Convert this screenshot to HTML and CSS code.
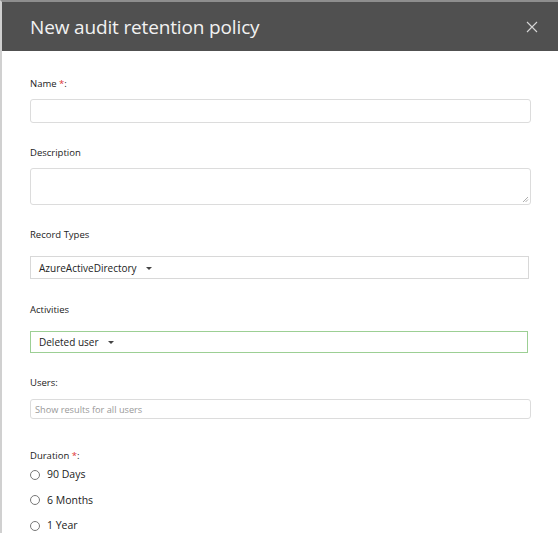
FILE: index.html
```html
<!DOCTYPE html>
<html>
<head>
<meta charset="utf-8">
<link rel="stylesheet" href="styles.css">
</head>
<body>
<div class="panel">
  <header class="head">
    <h1 class="title">New audit retention policy</h1>
    <svg class="close" width="12" height="12" viewBox="0 0 12 12"><path d="M1 1L11 11M11 1L1 11" stroke="#d6d6d6" stroke-width="1.1" fill="none"/></svg>
  </header>
  <form class="form">
    <div class="field">
      <label class="label">Name <span class="req">*</span>:</label>
      <div class="input name-input"></div>
    </div>
    <div class="field">
      <label class="label">Description</label>
      <div class="input textarea"><svg class="grip" width="7" height="7" viewBox="0 0 7 7"><path d="M6 1L1 6M6 3.5L3.5 6" stroke="#999" stroke-width="0.8"/></svg></div>
    </div>
    <div class="field wide">
      <label class="label">Record Types</label>
      <div class="select">AzureActiveDirectory<span class="caret"></span></div>
    </div>
    <div class="field wide act">
      <label class="label">Activities</label>
      <div class="select active">Deleted user<span class="caret"></span></div>
    </div>
    <div class="field users-field">
      <label class="label">Users:</label>
      <div class="input users">Show results for all users</div>
    </div>
    <div class="field duration">
      <label class="label">Duration <span class="req">*</span>:</label>
      <div class="radios">
        <div class="radio"><span class="dot"></span>90 Days</div>
        <div class="radio"><span class="dot"></span>6 Months</div>
        <div class="radio"><span class="dot"></span>1 Year</div>
      </div>
    </div>
  </form>
</div>
</body>
</html>
```
FILE: styles.css
```css
* { box-sizing: border-box; }
html, body { margin: 0; padding: 0; background: #fff; }
body {
  font-family: "Open Sans", "Noto Sans", sans-serif;
  color: #333;
  width: 558px;
  height: 533px;
  overflow: hidden;
}
.panel {
  border-top: 2px solid #8e8e8e;
  height: 533px;
  overflow: hidden;
  border-left: 2px solid #d0d0d0;
}
.head {
  height: 49px;
  background: #505050;
  display: flex;
  align-items: center;
  justify-content: space-between;
  padding: 0 20px 0 28px;
  margin-left: -2px;
  border-left: 2px solid #7c7c7c;
}
.title {
  margin: 0;
  font-weight: 400;
  font-size: 19px;
  color: #f2f2f2;
  letter-spacing: -0.15px;
}
.close { display: block; }
.form {
  padding: 26px 0 0 28px;
  display: flex;
  flex-direction: column;
}
.field { display: flex; flex-direction: column; margin-bottom: 23px; width: 501px; }
.field.wide { width: 499px; }
.field.act { width: 498px; margin-top: 1px; }
.label {
  font-size: 9.5px;
  line-height: 14px;
  color: #222;
  margin-bottom: 8px;
}
.req { color: #d33; }
.input {
  border: 1px solid #dcdcdc;
  border-radius: 3px;
  background: #fff;
}
.name-input { height: 24px; }
.textarea { height: 37px; position: relative; }
.grip { position: absolute; right: 1px; bottom: 1px; }
.wide .label { margin-bottom: 14px; }
.select {
  height: 23px;
  border: 1px solid #d8d8d8;
  font-size: 10px;
  color: #222;
  display: flex;
  align-items: center;
  padding-left: 8px;
}
.select.active { border-color: #9ccf94; height: 22px; }
.caret {
  width: 0; height: 0;
  border-left: 3px solid transparent;
  border-right: 3px solid transparent;
  border-top: 3px solid #444;
  margin-left: 9px;
  margin-top: 1px;
}
.users-field .label { margin-bottom: 9px; }
.users {
  height: 20px;
  font-size: 9.2px;
  color: #999;
  display: flex;
  align-items: center;
  padding-left: 4px;
}
.field.duration { margin-top: 7px; margin-bottom: 0; }
.duration .label { margin-bottom: 0; }
.radios { display: flex; flex-direction: column; gap: 10.5px; margin-top: 4px; }
.radio {
  display: flex;
  align-items: center;
  font-size: 10.5px;
  line-height: 15px;
  color: #222;
}
.dot {
  width: 10px; height: 10px;
  border: 1px solid #777;
  border-radius: 50%;
  margin-right: 7px;
}
```
